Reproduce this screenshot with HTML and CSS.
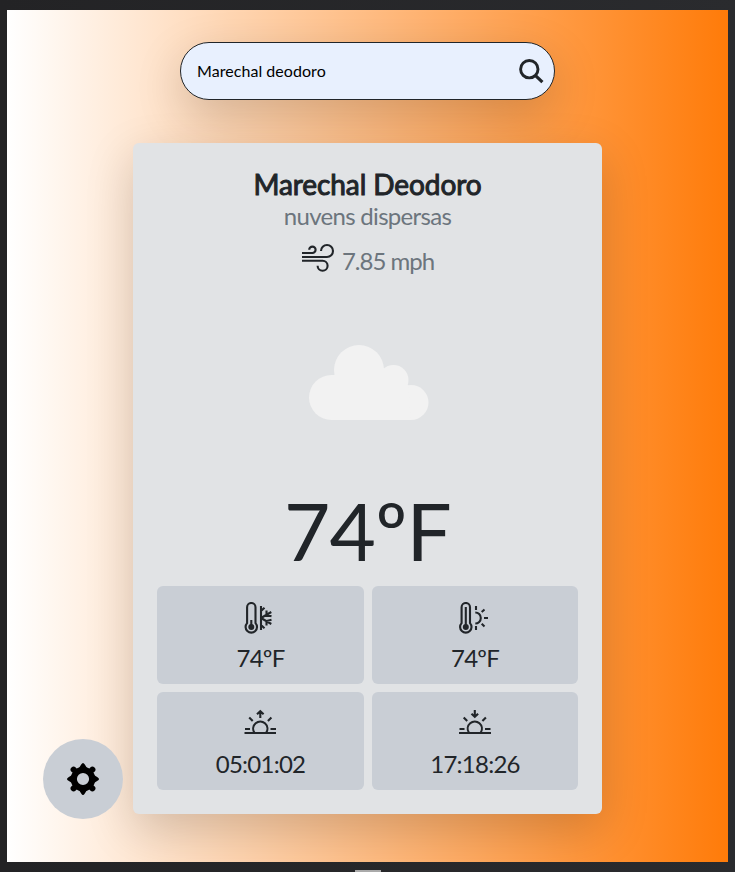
FILE: index.html
```html
<!DOCTYPE html>
<html lang="pt-BR">
<head>
<meta charset="utf-8">
<title>Marechal Deodoro</title>
<link rel="stylesheet" href="styles.css">
</head>
<body>
<main class="app">
  <form class="search">
    <span class="search-text">Marechal deodoro</span>
    <svg class="search-icon" viewBox="0 0 26 26"><circle cx="10.3" cy="10.2" r="8.7"/><path d="M16.3 16.4L23.4 23.2" stroke-width="3.2"/></svg>
  </form>
  <section class="card">
    <h1 class="city">Marechal Deodoro</h1>
    <p class="condition">nuvens dispersas</p>
    <div class="wind">
      <svg class="wind-icon" viewBox="0 0 34 30"><path d="M1 10H11.4A3.2 3.2 0 1 0 8.2 6.8M1 14H26A6 6 0 1 0 20 8M1 17.8H21.6A5 5 0 1 1 16.6 22.8"/></svg>
      <span>7.85 mph</span>
    </div>
    <svg class="cloud" viewBox="0 0 120 75"><circle cx="22.5" cy="52.5" r="22.5"/><circle cx="50" cy="25" r="25"/><circle cx="84.5" cy="35" r="15"/><circle cx="102" cy="57.5" r="17.5"/><path d="M22 30H40L75 23L99 40L102 75H22Z"/></svg>
    <div class="temperature">74ºF</div>
    <div class="details">
      <div class="detail">
        <svg class="icon" viewBox="0 0 32 32"><path d="M3.1 21.1V5.2a4.2 4.2 0 0 1 8.4 0V21.1a5.7 5.7 0 1 1-8.4 0ZM7.3 18v7M17 4v24M17 16L27.3 10M17 16L27.3 22M17 9l3.5-3.2M17 23l3.5 3.2M22.5 8.5V13l5 1.3M22.5 23.5V19l5-1.3"/><circle class="solid" cx="7.3" cy="25" r="3"/></svg>
        <span>74ºF</span>
      </div>
      <div class="detail">
        <svg class="icon" viewBox="0 0 32 32"><path d="M2.6 21.1V5.2a4.2 4.2 0 0 1 8.4 0V21.1a5.7 5.7 0 1 1-8.4 0ZM6.8 5v20M16.3 10.5a5.5 5.5 0 0 1 0 11M17 4v4M17 24v4M22.7 10l2.8-2.6M22.7 21.8l2.8 2.7M25 16h4"/><circle class="solid" cx="6.8" cy="25" r="3"/></svg>
        <span>74ºF</span>
      </div>
      <div class="detail">
        <svg class="icon" viewBox="0 0 32 32"><path d="M.5 27h31.5M1 23h5M26.5 23H32M10.3 26.5A7.1 7.1 0 1 1 22.3 26.5M5.2 11.5l3.5 3.5M27.4 11.5l-3.5 3.5M16.3 12V5M13 8.3l3.3-3.1 3.3 3.1"/></svg>
        <span>05:01:02</span>
      </div>
      <div class="detail">
        <svg class="icon" viewBox="0 0 32 32"><path d="M0 27h32M.5 23h5M26 23h5.5M9.8 26.5A7.1 7.1 0 1 1 21.8 26.5M4.7 11.5l3.5 3.5M26.9 11.5l-3.5 3.5M15.8 4v7M12.5 7.7l3.3 3.1 3.3-3.1"/></svg>
        <span>17:18:26</span>
      </div>
    </div>
  </section>
  <button class="settings" aria-label="Configurações">
    <svg class="gear" viewBox="-16 -16 32 32"><circle r="9.2" fill="none" stroke="#000" stroke-width="6.2"/><path d="M-4-11L-1.8-14.5Q0-17.5 1.8-14.5L4-11ZM-4 11L-1.8 14.5Q0 17.5 1.8 14.5L4 11ZM-11-4L-14.5-1.8Q-17.5 0-14.5 1.8L-11 4ZM11-4L14.5-1.8Q17.5 0 14.5 1.8L11 4Z"/><path d="M-9.4-9.4l.4.4M9.4-9.4l-.4.4M-9.4 9.4l.4-.4M9.4 9.4l-.4-.4" stroke="#000" stroke-width="6" stroke-linecap="round"/></svg>
  </button>
</main>
<div class="handle"></div>
</body>
</html>
```
FILE: styles.css
```css
* { box-sizing: border-box; }
body {
  margin: 0;
  height: 872px;
  padding: 10px 7px 0;
  overflow: hidden;
  background: linear-gradient(90deg, #232325, #2a2b2e);
  color: #212529;
  font-family: Lato, "Liberation Sans", sans-serif;
}
.app {
  position: relative;
  height: 852px;
  padding-top: 32px;
  display: flex;
  flex-direction: column;
  align-items: center;
  overflow: hidden;
  background: linear-gradient(90deg, #fff, #ff7b09);
}
.search {
  width: 375px;
  height: 58px;
  padding: 0 9px 0 16px;
  display: flex;
  align-items: center;
  justify-content: space-between;
  border: 1px solid #212529;
  border-radius: 29px;
  background: #e8f0fe;
  box-shadow: 0 16px 48px rgba(0, 0, 0, .175);
  color: #000;
  font-size: 16px;
}
.search-text { padding-bottom: 2px; letter-spacing: .05px; }
.search-icon { width: 26px; height: 26px; margin-top: 1px; }
.search-icon, .wind-icon, .icon { fill: none; stroke: #212529; stroke-width: 2.1; }
.search-icon { stroke-width: 2.9; }
.card {
  width: 469px;
  height: 671px;
  margin-top: 43px;
  padding: 24px;
  display: flex;
  flex-direction: column;
  align-items: center;
  border-radius: 6px;
  background: #e1e3e5;
  box-shadow: 0 16px 48px rgba(0, 0, 0, .175);
}
.card > * { flex-shrink: 0; }
.city {
  margin: 0;
  font-size: 28px;
  font-weight: 400;
  -webkit-text-stroke: 1px #212529;
  letter-spacing: -.08px;
  line-height: 34px;
}
.condition {
  margin: 0;
  color: #6c757d;
  font-size: 24px;
  letter-spacing: -.7px;
  line-height: 29px;
}
.wind {
  height: 34px;
  margin-top: 12px;
  display: flex;
  gap: 7px;
  color: #6c757d;
  font-size: 24px;
  letter-spacing: -1px;
  line-height: 38px;
}
.wind-icon { width: 34px; height: 30px; margin-top: 1px; }
.cloud { width: 120px; height: 75px; margin: 69px 0 0 2px; fill: #f2f2f2; }
.temperature {
  height: 96px;
  margin-top: 62px;
  font-size: 80px;
  letter-spacing: -.8px;
  line-height: 96px;
}
.details {
  width: 100%;
  margin-top: 8px;
  display: grid;
  grid-template-columns: 207px 206px;
  gap: 8px;
}
.detail {
  height: 98px;
  padding-top: 16px;
  display: flex;
  flex-direction: column;
  align-items: center;
  border-radius: 6px;
  background: #c9ced5;
  font-size: 24px;
  letter-spacing: -.75px;
  line-height: 36px;
}
.icon { width: 32px; height: 32px; margin-bottom: 6px; }
.detail:nth-child(n+3) .icon { margin: -2px 0 8px; }
.detail:nth-child(odd) .icon { margin-right: 1px; }
.icon .solid { fill: #212529; stroke: none; }
.settings {
  position: absolute;
  left: 36px;
  bottom: 43px;
  width: 80px;
  height: 80px;
  padding: 0;
  display: grid;
  place-items: center;
  border: 0;
  border-radius: 50%;
  background: #c9ced5;
}
.gear { width: 32px; height: 32px; }
.handle { width: 26px; height: 2px; margin: 8px 0 0 348px; background: #aaa; }
```
